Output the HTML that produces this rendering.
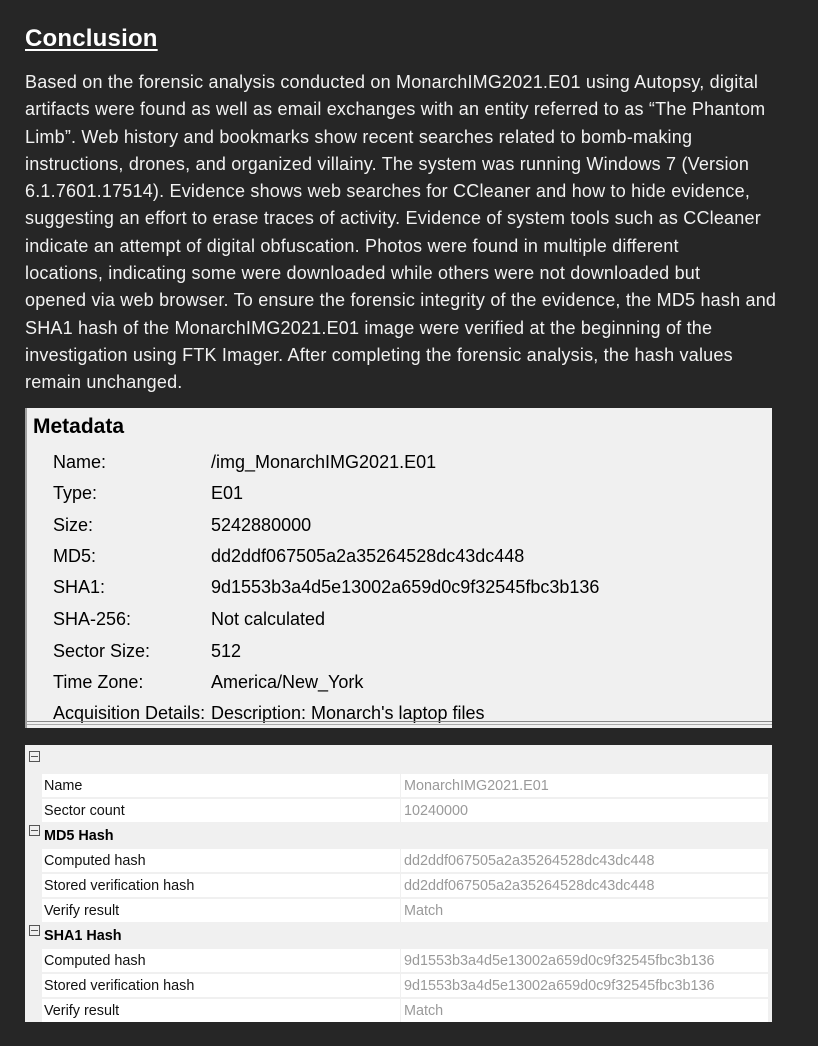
<!DOCTYPE html>
<html><head><meta charset="utf-8"><style>
body{margin:0;background:#262626;width:818px;height:1046px;overflow:hidden;font-family:"Liberation Sans",sans-serif;position:relative}
h1{position:absolute;left:25px;top:25px;margin:0;font-size:24px;font-weight:bold;color:#fff;text-decoration:underline;text-underline-offset:3px;text-decoration-thickness:2px;letter-spacing:0.2px}
.p{position:absolute;left:25px;top:69px;color:#f2f2f2;font-size:18px;letter-spacing:0.2px;line-height:27.3px;white-space:nowrap}
.p div{height:27.3px}
.meta{position:absolute;left:25px;top:408px;width:747px;height:320px;background:#f0f0f0;overflow:hidden;border-left:2px solid #a0a0a0;box-sizing:border-box}
.meta .t{position:absolute;left:6px;top:7px;font-size:21px;font-weight:bold;color:#000}
.meta .r{position:absolute;left:26px;font-size:18px;color:#000;white-space:nowrap}
.meta .r span{position:absolute;left:158px}
.meta .bl{position:absolute;left:0;right:0;top:313px;height:1px;background:#888}
.meta .bl2{position:absolute;left:0;right:0;top:316px;height:1px;background:#aaa}
.grid{position:absolute;left:25px;top:745px;width:747px;height:277px;background:#f0f0f0;overflow:hidden;font-size:14.4px}
.grid .row{position:absolute;left:17px;width:726px;height:23px;background:#fff}
.grid .row .k{position:absolute;left:2px;top:4px;color:#111}
.grid .row .v{position:absolute;left:362px;top:4px;color:#9a9a9a}
.grid .row .d{position:absolute;left:358px;top:0;width:1px;height:23px;background:#f0f0f0}
.grid .g{position:absolute;left:19px;font-weight:bold;color:#000}
.bx{position:absolute;left:4px;width:11px;height:11px;border:1px solid #555;box-sizing:border-box}
.bx:after{content:"";position:absolute;left:1px;right:1px;top:4px;height:1px;background:#555}
</style></head><body>
<h1>Conclusion</h1>
<div class="p">
<div>Based on the forensic analysis conducted on MonarchIMG2021.E01 using Autopsy, digital</div>
<div>artifacts were found as well as email exchanges with an entity referred to as “The Phantom</div>
<div>Limb”. Web history and bookmarks show recent searches related to bomb-making</div>
<div>instructions, drones, and organized villainy. The system was running Windows 7 (Version</div>
<div>6.1.7601.17514). Evidence shows web searches for CCleaner and how to hide evidence,</div>
<div>suggesting an effort to erase traces of activity. Evidence of system tools such as CCleaner</div>
<div>indicate an attempt of digital obfuscation. Photos were found in multiple different</div>
<div>locations, indicating some were downloaded while others were not downloaded but</div>
<div>opened via web browser. To ensure the forensic integrity of the evidence, the MD5 hash and</div>
<div>SHA1 hash of the MonarchIMG2021.E01 image were verified at the beginning of the</div>
<div>investigation using FTK Imager. After completing the forensic analysis, the hash values</div>
<div>remain unchanged.</div>
</div>
<div class="meta">
<div class="t">Metadata</div>
<div class="r" style="top:44px">Name:<span>/img_MonarchIMG2021.E01</span></div>
<div class="r" style="top:75px">Type:<span>E01</span></div>
<div class="r" style="top:107px">Size:<span>5242880000</span></div>
<div class="r" style="top:138px">MD5:<span>dd2ddf067505a2a35264528dc43dc448</span></div>
<div class="r" style="top:169px">SHA1:<span>9d1553b3a4d5e13002a659d0c9f32545fbc3b136</span></div>
<div class="r" style="top:201px">SHA-256:<span>Not calculated</span></div>
<div class="r" style="top:233px">Sector Size:<span>512</span></div>
<div class="r" style="top:264px">Time Zone:<span>America/New_York</span></div>
<div class="r" style="top:295px">Acquisition Details:<span>Description: Monarch's laptop files</span></div>
<div class="bl"></div><div class="bl2"></div>
</div>
<div class="grid">
<div class="bx" style="top:6px"></div>
<div class="row" style="top:29px"><span class="k">Name</span><span class="d"></span><span class="v">MonarchIMG2021.E01</span></div>
<div class="row" style="top:54px"><span class="k">Sector count</span><span class="d"></span><span class="v">10240000</span></div>
<div class="bx" style="top:80px"></div><div class="g" style="top:83px">MD5 Hash</div>
<div class="row" style="top:104px"><span class="k">Computed hash</span><span class="d"></span><span class="v">dd2ddf067505a2a35264528dc43dc448</span></div>
<div class="row" style="top:129px"><span class="k">Stored verification hash</span><span class="d"></span><span class="v">dd2ddf067505a2a35264528dc43dc448</span></div>
<div class="row" style="top:154px"><span class="k">Verify result</span><span class="d"></span><span class="v">Match</span></div>
<div class="bx" style="top:180px"></div><div class="g" style="top:183px">SHA1 Hash</div>
<div class="row" style="top:204px"><span class="k">Computed hash</span><span class="d"></span><span class="v">9d1553b3a4d5e13002a659d0c9f32545fbc3b136</span></div>
<div class="row" style="top:229px"><span class="k">Stored verification hash</span><span class="d"></span><span class="v">9d1553b3a4d5e13002a659d0c9f32545fbc3b136</span></div>
<div class="row" style="top:254px"><span class="k">Verify result</span><span class="d"></span><span class="v">Match</span></div>
</div>
</body></html>
